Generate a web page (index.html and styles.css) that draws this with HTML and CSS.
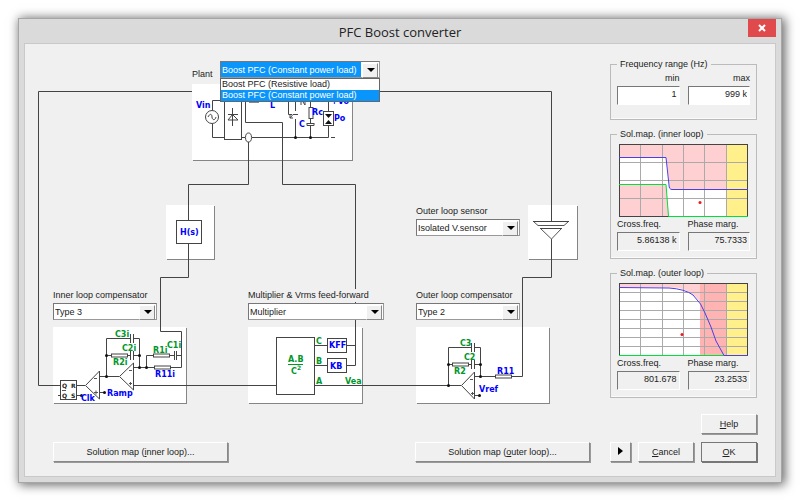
FILE: index.html
```html
<!DOCTYPE html>
<html lang="en">
<head>
<meta charset="utf-8">
<title>PFC Boost converter</title>
<link rel="stylesheet" href="styles.css">
</head>
<body>
<main class="window">
  <header class="titlebar">
    <h1 class="title">PFC Boost converter</h1>
    <button class="close" type="button" aria-label="Close">
      <svg width="8" height="8" viewBox="0 0 8 8"><path d="M1 1L7 7M7 1L1 7"/></svg>
    </button>
  </header>

  <form class="client">
    <section class="design">
      <div class="canvas">
        <svg class="schematic" width="575" height="380" viewBox="25 44 575 380">
          <!-- component panels -->
          <g class="shade">
            <rect x="193" y="85" width="160" height="76"/>
            <rect x="167" y="206" width="48" height="54"/>
            <rect x="529" y="206" width="49" height="54"/>
            <rect x="54" y="328" width="133" height="76"/>
            <rect x="249" y="328" width="114" height="76"/>
            <rect x="417" y="328" width="133" height="76"/>
          </g>
          <g class="sheet">
            <rect x="192" y="84" width="160" height="76"/>
            <rect x="166" y="205" width="48" height="54"/>
            <rect x="528" y="205" width="49" height="54"/>
            <rect x="53" y="327" width="133" height="76"/>
            <rect x="248" y="327" width="114" height="76"/>
            <rect x="416" y="327" width="133" height="76"/>
          </g>
          <!-- wiring between components -->
          <g class="wire">
            <path d="M192 91.500H38.500V385.500H61M352 91.500H551.500V222M551.500 239V277.500H522.500V376.500H511"/>
            <path d="M248.500 142V184.500H188.500V220M188.500 244V277.500H160.500V331.500H181.500V367.500H170"/>
            <path d="M245.500 101V122.500H282.500V184.500H355.500V365.500H346"/>
            <path d="M134 385.500H276M315 385.500H461"/>
          </g>
          <!-- plant -->
          <g class="wire">
            <path d="M224 100.500H212.500V110M212.500 124V137.500H224M241 137.500H245M252 137.500H328.500V125M328.500 111V100M331 137.500H335M241 100.500H245M245 100.500H328"/>
            <rect x="224.500" y="95.500" width="17" height="44"/>
            <circle cx="212" cy="117" r="6.500"/>
            <path d="M208 117c2-4 4-3 4 0s3 4 4 0M232.500 108V126M228 114.500H238M228 120H238L232.500 114.500Z"/>
            <ellipse cx="248.500" cy="137.500" rx="3" ry="4.500"/>
            <path d="M288.500 100V114.500H292M298 114.500H293L290 118M290 115V118H293M295.500 100V111M295.500 119V137M301 105V99L305 105V99"/>
            <path d="M310.500 100V107M310.500 119V123M310.500 126V137M307 123.500H314M307 123V125.500H314V123"/>
            <rect x="309" y="107.500" width="4" height="11"/>
            <rect x="323.500" y="111.500" width="10" height="14"/>
          </g>
          <g class="fill">
            <path d="M325 114H332L328.500 118ZM325 124H332L328.500 120ZM249 100H259V102.500H249Z"/>
            <circle cx="295.500" cy="137.500" r="1.500"/><circle cx="310.500" cy="137.500" r="1.500"/>
          </g>
          <g class="blue">
            <text x="196" y="108">Vin</text><text x="270" y="108">L</text>
            <text x="312" y="115">Rc</text><text x="299" y="127">C</text>
            <text x="334" y="121">Po</text><text x="331" y="104">+Vo</text>
          </g>
          <!-- current sensor -->
          <g class="wire"><rect x="176.500" y="220.500" width="25" height="23"/></g>
          <text class="blue" x="180" y="235">H(s)</text>
          <!-- isolated sensor -->
          <g class="wire"><path class="thin" d="M533.500 221.500H568.500L564 225.500H538ZM540.500 228.500H561.500L551.500 239Z"/><path d="M533 221.500H569M540 228.500H562"/></g>
          <!-- inner loop compensator -->
          <g class="wire">
            <path d="M106.500 376V338.500H131M134 338.500H139.500V367.500M106 355.500H111M127 355.500H131M134 355.500H139.500M130.500 334V343M133.500 334V343M130.500 351V360M133.500 351V360"/>
            <path d="M133.500 363V390L119.500 376.500ZM119 376.500H99.500M134 367.500H154M146.500 367V355.500H153M169 355.500H174M177 355.500H181M174.500 351V360M176.500 351V360"/>
            <path d="M99.500 371V399L85.500 385.500ZM85 385.500H77M99 392.500H104M77 395.500H82M58 395.500H61"/>
            <rect x="60.500" y="380.500" width="16" height="19"/>
            <rect x="111.500" y="354" width="16" height="3"/><rect x="153.500" y="354" width="16" height="3"/><rect x="154.500" y="366" width="16" height="3"/>
            <path class="thin" d="M129 370.500H132M94 378.500H97M129 383.500H132M130.500 382V385M94 392.500H98M96 390.500V394.500M62 390.500H66"/>
          </g>
          <g class="fill">
            <circle cx="106.500" cy="355.500" r="1.500"/><circle cx="139.500" cy="355.500" r="1.500"/><circle cx="139.500" cy="367.500" r="1.500"/><circle cx="146.500" cy="367.500" r="1.500"/><circle cx="106.500" cy="376.500" r="1.500"/><circle cx="104.500" cy="392.500" r="1.500"/><circle cx="81.500" cy="395.500" r="1.500"/>
          </g>
          <g class="pin"><text x="62" y="388">Q</text><text x="71" y="388">R</text><text x="62" y="398">Q</text><text x="71" y="398">S</text></g>
          <g class="green">
            <text x="115" y="337">C3i</text><text x="122" y="351">C2i</text><text x="113" y="365">R2i</text><text x="153" y="353">R1i</text><text x="167" y="348">C1i</text>
          </g>
          <g class="blue"><text x="155" y="377">R11i</text><text x="107" y="396">Ramp</text><text x="81" y="401">Clk</text></g>
          <!-- multiplier -->
          <g class="wire">
            <rect x="276.500" y="337.500" width="38" height="57"/>
            <rect x="327.500" y="338.500" width="19" height="14"/><rect x="327.500" y="358.500" width="19" height="14"/>
            <path d="M315 345.500H327M347 345.500H355M315 365.500H327"/>
          </g>
          <g class="green">
            <text x="316" y="344">C</text><text x="316" y="364">B</text><text x="316" y="384">A</text><text x="345" y="384">Vea</text>
            <text x="288" y="362">A.B</text><text x="291" y="374">C</text><text class="power" x="297" y="370">2</text>
            <path class="fraction" d="M288 364.500H303"/>
          </g>
          <g class="blue"><text x="329" y="348">KFF</text><text x="330" y="369">KB</text></g>
          <!-- outer loop compensator -->
          <g class="wire">
            <path d="M448.500 385V347.500H472M475 347.500H480.500V376.500M448 364.500H452M468 364.500H472M475 364.500H480M471.500 343V352M474.500 343V352M471.500 360V369M474.500 360V369"/>
            <path d="M474.500 372V399L461.500 385.500ZM475 376.500H495M474 395.500H479"/>
            <rect x="452.500" y="363" width="16" height="3"/><rect x="495.500" y="375" width="16" height="3"/>
            <path class="thin" d="M470 379.500H473M471 393.500H474M472.500 392V395"/>
          </g>
          <g class="fill">
            <circle cx="448.500" cy="364.500" r="1.500"/><circle cx="480.500" cy="364.500" r="1.500"/><circle cx="480.500" cy="376.500" r="1.500"/><circle cx="448.500" cy="385.500" r="1.500"/><circle cx="479.500" cy="395.500" r="1.500"/>
          </g>
          <g class="green"><text x="460" y="346">C3</text><text x="464" y="360">C2</text><text x="454" y="374">R2</text></g>
          <g class="blue"><text x="497" y="374">R11</text><text x="479" y="392">Vref</text></g>
        </svg>

        <div class="node node-plant">
          <label for="plant">Plant</label>
          <div class="combo combo-open">
            <select id="plant"><option>Boost PFC (Resistive load)</option><option selected>Boost PFC (Constant power load)</option></select>
            <ul class="options"><li>Boost PFC (Resistive load)</li><li class="current">Boost PFC (Constant power load)</li></ul>
          </div>
        </div>
        <div class="node node-sensor">
          <label for="sensor">Outer loop sensor</label>
          <div class="combo"><select id="sensor"><option>Isolated V.sensor</option></select></div>
        </div>
        <div class="node node-inner">
          <label for="inner">Inner loop compensator</label>
          <div class="combo"><select id="inner"><option>Type 3</option></select></div>
        </div>
        <div class="node node-multiplier">
          <label for="multiplier">Multiplier &amp; Vrms feed-forward</label>
          <div class="combo"><select id="multiplier"><option>Multiplier</option></select></div>
        </div>
        <div class="node node-outer">
          <label for="outer">Outer loop compensator</label>
          <div class="combo"><select id="outer"><option>Type 2</option></select></div>
        </div>
      </div>
      <div class="maps">
        <button class="button" type="button">Solution map (<u>i</u>nner loop)...</button>
        <button class="button" type="button">Solution map (<u>o</u>uter loop)...</button>
      </div>
    </section>

    <aside class="side">
      <fieldset class="group group-range">
        <legend>Frequency range (Hz)</legend>
        <div class="fields range">
          <label for="fmin">min</label><label for="fmax">max</label>
          <input id="fmin" value="1"><input id="fmax" value="999 k">
        </div>
      </fieldset>
      <fieldset class="group">
        <legend>Sol.map. (inner loop)</legend>
        <svg class="chart" viewBox="0 0 129 73" width="129" height="73">
          <rect class="white" width="129" height="73"/>
          <path class="pink" d="M0 0H108V45H51L47 13H0ZM0 40H47L50 73H0Z"/>
          <rect class="yellow" x="108" width="21" height="73"/>
          <path class="grid" d="M21.500 0V73M43.500 0V73M64.500 0V73M85.500 0V73M107.500 0V73M0 18.500H129M0 36.500H129M0 54.500H129"/>
          <rect class="frame" x="0.500" y="0.500" width="128" height="72"/>
          <path class="curve" d="M0 13.500H47L50 41Q50 45.500 53 45.500H129"/>
          <path class="limit" d="M0 40.500H47L49.500 72.500H129"/>
          <circle class="point" cx="81" cy="58.500" r="1.500"/>
        </svg>
        <div class="fields">
          <label for="icf">Cross.freq.</label><label for="ipm">Phase marg.</label>
          <input id="icf" value="5.86138 k" readonly><input id="ipm" value="75.7333" readonly>
        </div>
      </fieldset>
      <fieldset class="group">
        <legend>Sol.map. (outer loop)</legend>
        <svg class="chart" viewBox="0 0 129 73" width="129" height="73">
          <rect class="white" width="129" height="73"/>
          <path class="pink" d="M0 0H81V19Q73 8 60 5Q54 4 0 4Z"/>
          <rect class="rose" x="81" width="27" height="73"/>
          <rect class="yellow" x="108" width="21" height="73"/>
          <path class="grid" d="M21.500 0V73M43.500 0V73M64.500 0V73M85.500 0V73M107.500 0V73M0 9.500H129M0 18.500H129M0 27.500H129M0 36.500H129M0 45.500H129M0 54.500H129M0 63.500H129"/>
          <rect class="frame" x="0.500" y="0.500" width="128" height="72"/>
          <path class="limit" d="M0 72.500H105"/>
          <path class="curve" d="M0 4.500L50 5Q66 6 74 12Q83 21 86 30L92 44L97 58L105 72.500H129"/>
          <circle class="point" cx="63" cy="51.500" r="1.500"/>
        </svg>
        <div class="fields">
          <label for="ocf">Cross.freq.</label><label for="opm">Phase marg.</label>
          <input id="ocf" value="801.678" readonly><input id="opm" value="23.2533" readonly>
        </div>
      </fieldset>
      <div class="actions">
        <button class="button help" type="button"><u>H</u>elp</button>
        <button class="button" type="button" aria-label="Run"><svg width="5" height="8" viewBox="0 0 5 8"><path d="M0 0L5 4L0 8Z"/></svg></button>
        <button class="button" type="button"><u>C</u>ancel</button>
        <button class="button default" type="button"><u>O</u>K</button>
      </div>
    </aside>
  </form>
</main>
</body>
</html>
```
FILE: styles.css
```css
* { box-sizing: border-box; }

body {
  margin: 0;
  padding: 18px;
  background: #fff;
  color: #222;
  font: 9px/12px "Liberation Sans", Arial, sans-serif;
}

.window {
  padding: 0 5px 5px;
  border: 1px solid #a6a6a6;
  background: #dadada;
  box-shadow: 2px 1px 10px 1px rgba(0, 0, 0, 0.6);
}

.titlebar {
  display: grid;
  grid-template-columns: 28px 1fr 28px;
  height: 24px;
}
.title {
  grid-column: 2;
  margin: 0;
  font: 13px/26px "Open Sans", sans-serif;
  text-align: center;
}
.close {
  display: flex;
  align-items: center;
  justify-content: center;
  height: 18px;
  padding: 0;
  border: 0;
  background: #e04a4c;
}
.close path { stroke: #fff; stroke-width: 2; }

.client {
  display: flex;
  justify-content: space-between;
  padding: 0 18px 14px 0;
  border: 1px solid #c9c9c9;
  background: #f0f0f0;
}

/* Schematic */
.canvas { position: relative; height: 380px; }
.schematic { display: block; }
.sheet { fill: #fff; }
.shade { fill: #858585; }
.wire { fill: none; stroke: #444; }
.thin { stroke: #555; }
.fill { fill: #111; }
.blue, .green { font: bold 8px "DejaVu Sans", sans-serif; }
.blue { fill: #00f; }
.green { fill: #00962a; }
.power { font-size: 6px; }
.fraction { stroke: #00962a; }
.pin { fill: #222; font: bold 6px "DejaVu Sans", sans-serif; }

.node { position: absolute; display: grid; gap: 1px; }
.node label { background: #f0f0f0; line-height: 13px; white-space: nowrap; }
.node-plant { left: 167px; top: 17px; grid-template-columns: 27px 160px; }
.node-plant label { padding-top: 7px; background: none; }
.node-sensor { left: 391px; top: 161px; width: 104px; }
.node-inner { left: 28px; top: 245px; width: 104px; }
.node-multiplier { left: 223px; top: 245px; width: 136px; }
.node-outer { left: 391px; top: 245px; width: 104px; }

.combo { position: relative; }
.combo select {
  appearance: none;
  display: block;
  width: 100%;
  height: 17px;
  padding: 0 16px 0 1px;
  border: 1px solid;
  border-color: #777 #999 #999 #777;
  border-radius: 0;
  background: #fff;
  color: #222;
  font: inherit;
}
.combo::before {
  content: "";
  position: absolute;
  top: 2px;
  right: 2px;
  width: 14px;
  height: 13px;
  border: 1px solid;
  border-color: #fff #888 #888 #fff;
  background: #f0f0f0;
}
.combo::after {
  content: "";
  position: absolute;
  top: 7px;
  right: 5px;
  border: 4px solid transparent;
  border-top: 4px solid #000;
  border-bottom: 0;
}
.combo-open select { background: linear-gradient(90deg, #0a95fb 140px, #fff 0); color: #fff; }
.options {
  position: absolute;
  z-index: 1;
  top: 17px;
  left: 0;
  width: 100%;
  margin: 0;
  padding: 0;
  border: 1px solid #666;
  background: #fff;
  line-height: 11px;
  list-style: none;
  white-space: nowrap;
}
.options li { padding: 0 1px; }
.options .current { background: #0a95fb; color: #fff; }

.button {
  height: 20px;
  padding: 0;
  border: 1px solid;
  border-color: #fff #888 #888 #fff;
  border-radius: 0;
  background: #f0f0f0;
  box-shadow: 1px 1px #999;
  color: #222;
  font: inherit;
}
.default { border-color: #777; box-shadow: 1px 1px #777; }
.maps {
  display: flex;
  justify-content: space-between;
  padding: 18px 10px 0 28px;
}
.maps .button { width: 175px; }

/* Side column */
.side { width: 147px; padding-top: 13px; }
.group {
  min-width: 0;
  margin: 0 0 7px;
  padding: 3px 6px 7px;
  border: 1px solid #bbb;
  box-shadow: inset 0 -1px #fafafa;
}
.group legend { padding: 0 3px; line-height: 14px; }
.group-range { padding: 1px 6px 14px; }
.fields {
  display: grid;
  grid-template-columns: 1fr 1fr;
  column-gap: 8px;
  row-gap: 2px;
}
.range label { text-align: right; }
.fields input {
  width: 100%;
  height: 19px;
  padding: 0 2px 4px;
  border: 1px solid;
  border-color: #777 #fff #fff #777;
  background: #fff;
  color: #222;
  font: inherit;
  text-align: right;
}
.fields input:read-only { background: #f0f0f0; }
.chart { display: block; margin: 0 auto 1px; }
.white { fill: #fff; }
.pink { fill: #ffd0d2; }
.rose { fill: #ffb3b3; }
.yellow { fill: #fff08c; }
.grid { stroke: #aaa; }
.frame { fill: none; stroke: #444; }
.curve { fill: none; stroke: #4a3ee6; }
.limit { fill: none; stroke: #00e03c; }
.point { fill: #f01818; }

.actions {
  display: grid;
  grid-template-columns: 21px 1fr 1fr;
  gap: 8px 7px;
  padding-top: 9px;
}
.help { grid-column: 3; }
```
